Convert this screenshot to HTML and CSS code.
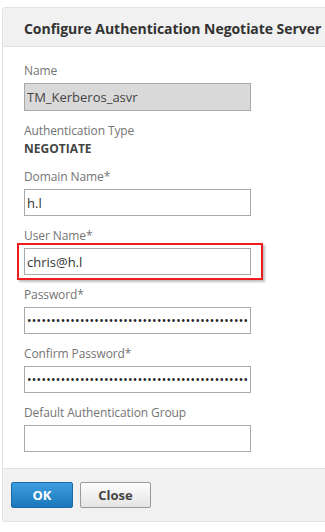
FILE: index.html
```html
<!DOCTYPE html>
<html lang="en">
  <head>
    <meta charset="UTF-8" />
    <title>Configure Authentication Negotiate Server</title>
    <link rel="stylesheet" href="styles.css">
  </head>
  <body>
    <div class="dialog">
      <header class="dialog-head">
        <h1>Configure Authentication Negotiate Server</h1>
      </header>

      <main class="dialog-body">
        <div class="field">
          <label for="name">Name</label>
          <input class="input input-disabled" id="name" value="TM_Kerberos_asvr" readonly />
        </div>
        <div class="field field-static">
          <span class="label">Authentication Type</span>
          <span class="value">NEGOTIATE</span>
        </div>
        <div class="field">
          <label for="domain">Domain Name*</label>
          <input class="input" id="domain" value="h.l" />
        </div>
        <div class="field">
          <label for="user">User Name*</label>
          <div class="highlight">
            <input class="input" id="user" value="chris@h.l" />
          </div>
        </div>
        <div class="field">
          <label for="password">Password*</label>
          <input class="input input-dots" id="password" type="password" value="xxxxxxxxxxxxxxxxxxxxxxxxxxxxxxxxxxxxxxxxxxxxxxxxxxxxxxxxxx" />
        </div>
        <div class="field">
          <label for="confirm">Confirm Password*</label>
          <input class="input input-dots" id="confirm" type="password" value="xxxxxxxxxxxxxxxxxxxxxxxxxxxxxxxxxxxxxxxxxxxxxxxxxxxxxxxxxx" />
        </div>
        <div class="field">
          <label for="group">Default Authentication Group</label>
          <input class="input" id="group" value="" />
        </div>
      </main>

      <footer class="dialog-foot">
        <button class="button button-primary">OK</button>
        <button class="button">Close</button>
      </footer>
    </div>
  </body>
</html>
```

FILE: styles.css
```css
body {
  background-color: #fff;
  margin: 0;
  font-family: "Open Sans", "Noto Sans", sans-serif;
  overflow: hidden;
}

.dialog {
  margin: 7px 0 0 2px;
  border: 1px solid #e2e2e2;
  border-right: none;
  border-radius: 3px 0 0 3px;
}

.dialog-head {
  background-color: #f1f1f1;
  border-bottom: 1px solid #e2e2e2;
  padding: 11px 0 8px 21px;
}

.dialog-head h1 {
  margin: 0;
  font-size: 14px;
  line-height: 19px;
  font-weight: 700;
  color: #333;
  white-space: nowrap;
  letter-spacing: -0.05px;
}

.dialog-body {
  background-color: #fff;
  padding: 16px 0 16px 21px;
  display: flex;
  flex-direction: column;
  gap: 12px;
}

.field {
  display: flex;
  flex-direction: column;
  gap: 4px;
}

.field-static {
  gap: 2px;
}

.field label,
.label {
  font-size: 12px;
  color: #747474;
  line-height: 16px;
  letter-spacing: -0.1px;
}

.value {
  font-size: 12px;
  font-weight: 700;
  color: #444;
  line-height: 16px;
}

.input {
  box-sizing: border-box;
  width: 227px;
  height: 27px;
  border: 1px solid #a9a9a9;
  padding: 0 2px;
  font-family: "Open Sans", "Noto Sans", sans-serif;
  font-size: 13px;
  color: #333;
  background-color: #fff;
  outline: none;
}

.input-disabled {
  height: 28px;
  background-color: #d9d9d9;
  color: #444;
}

.input-dots {
  font-size: 12px;
  letter-spacing: 0.3px;
  color: #222;
}

.highlight {
  width: 233px;
  margin: -5px 0 -5px -7px;
  padding: 3px 4px 3px 5px;
  border: 2px solid #ee1c1c;
  box-shadow: 2px 2px 2px rgba(0, 0, 0, 0.25);
}

.dialog-foot {
  background-color: #f1f1f1;
  border-top: 1px solid #e2e2e2;
  height: 52px;
  display: flex;
  align-items: center;
  gap: 7px;
  padding-left: 8px;
}

.button {
  height: 26px;
  min-width: 71px;
  padding: 0 14px;
  border: 1px solid #9a9a9a;
  border-radius: 2px;
  background: linear-gradient(#fdfdfd, #e4e4e4);
  font-family: "Open Sans", "Noto Sans", sans-serif;
  font-size: 13px;
  font-weight: 700;
  color: #444;
  cursor: pointer;
}

.button-primary {
  min-width: 62px;
  border-color: #1a6aa5;
  background: linear-gradient(#3d9ee0, #1b78ba);
  color: #fff;
}
```
